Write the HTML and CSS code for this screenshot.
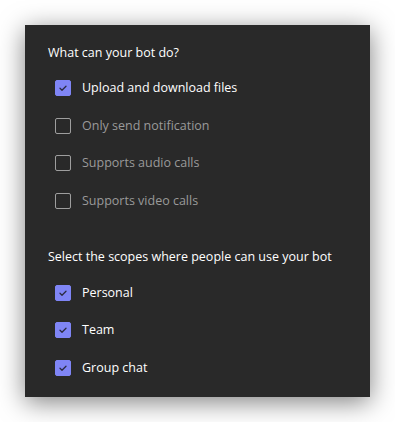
FILE: index.html
```html
<!DOCTYPE html>
<html>
<head>
<meta charset="utf-8">
<link rel="stylesheet" href="styles.css">
</head>
<body>
<div class="panel">
  <div class="heading">What can your bot do?</div>
  <div class="group">
    <div class="row checked"><span class="box"><svg viewBox="0 0 16 16" width="16" height="16"><path d="M5 8.3 L7 10.2 L11 6.2" fill="none" stroke="#2b2b40" stroke-width="1.3" stroke-linecap="round" stroke-linejoin="round"/></svg></span><span class="label">Upload and download files</span></div>
    <div class="row"><span class="box"></span><span class="label">Only send notification</span></div>
    <div class="row"><span class="box"></span><span class="label">Supports audio calls</span></div>
    <div class="row"><span class="box"></span><span class="label">Supports video calls</span></div>
  </div>
  <div class="heading second">Select the scopes where people can use your bot</div>
  <div class="group">
    <div class="row checked"><span class="box"><svg viewBox="0 0 16 16" width="16" height="16"><path d="M5 8.3 L7 10.2 L11 6.2" fill="none" stroke="#2b2b40" stroke-width="1.3" stroke-linecap="round" stroke-linejoin="round"/></svg></span><span class="label">Personal</span></div>
    <div class="row checked"><span class="box"><svg viewBox="0 0 16 16" width="16" height="16"><path d="M5 8.3 L7 10.2 L11 6.2" fill="none" stroke="#2b2b40" stroke-width="1.3" stroke-linecap="round" stroke-linejoin="round"/></svg></span><span class="label">Team</span></div>
    <div class="row checked"><span class="box"><svg viewBox="0 0 16 16" width="16" height="16"><path d="M5 8.3 L7 10.2 L11 6.2" fill="none" stroke="#2b2b40" stroke-width="1.3" stroke-linecap="round" stroke-linejoin="round"/></svg></span><span class="label">Group chat</span></div>
  </div>
</div>
</body>
</html>
```
FILE: styles.css
```css
html, body {
  margin: 0;
  padding: 0;
  background: #ffffff;
}
body {
  padding: 25px;
  font-family: "Open Sans", "Noto Sans", sans-serif;
  font-size: 12.5px;
}
.panel {
  width: 345px;
  height: 372px;
  box-sizing: border-box;
  padding: 17.5px 0 0 23px;
  background: #292929;
  box-shadow: 0 5px 24px rgba(0, 0, 0, 0.5);
}
.heading {
  height: 20px;
  line-height: 20px;
  color: #ffffff;
}
.heading.second {
  margin-top: 28px;
}
.group {
  margin-top: 6.75px;
  padding-left: 7px;
}
.row {
  height: 37.5px;
  display: flex;
  align-items: center;
  gap: 11px;
}
.box {
  width: 16px;
  height: 16px;
  box-sizing: border-box;
  border: 1px solid #9e9e9e;
  border-radius: 2px;
  display: flex;
  align-items: center;
  justify-content: center;
}
.box svg {
  display: block;
  flex: none;
}
.row.checked .box {
  background: #7f85f5;
  border-color: #7f85f5;
}
.label {
  color: #9a9a9a;
  line-height: 20px;
}
.row.checked .label {
  color: #ffffff;
}
```
